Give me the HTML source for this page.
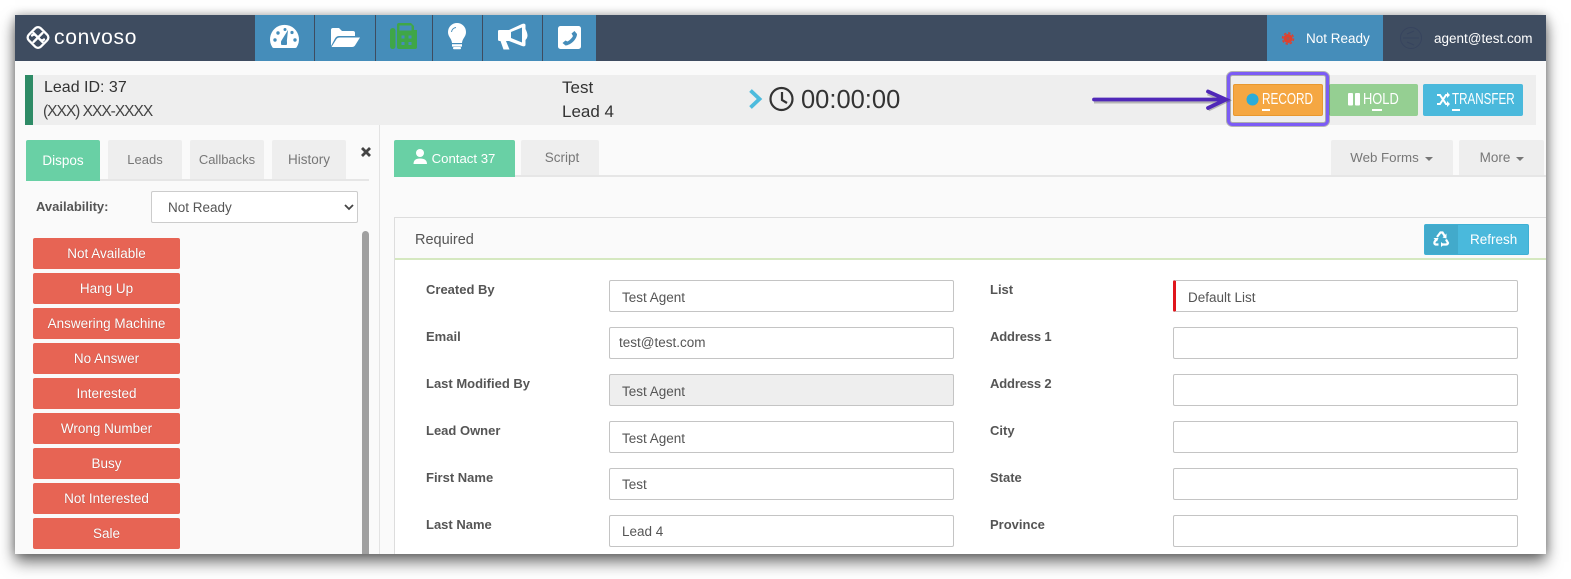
<!DOCTYPE html>
<html><head><meta charset="utf-8"><style>
html,body{margin:0;padding:0;background:#fff;width:1571px;height:579px;overflow:hidden;font-family:"Liberation Sans",sans-serif}
#w{position:absolute;left:15px;top:15px;width:1531px;height:539px;background:#fafafa;box-shadow:0 8px 15px rgba(0,0,0,.55),0 0 9px rgba(0,0,0,.28)}
#c{position:absolute;left:0;top:0;width:1546px;height:554px;overflow:hidden;filter:blur(.3px)}
.b{position:absolute;box-sizing:border-box}
.t{position:absolute;white-space:nowrap;line-height:20px;height:20px}
.sx{transform-origin:left center}
.tab{position:absolute;box-sizing:border-box;background:#eee;color:#777;font-size:13.5px;display:flex;align-items:center;justify-content:center;border-radius:2px 2px 0 0}
.on{background:#69d0a5;color:#fff}
.red{position:absolute;left:33px;width:147px;height:31px;background:#e76454;color:#fff;font-size:13.5px;display:flex;align-items:center;justify-content:center;border-radius:2px;text-shadow:0 0 1px rgba(0,0,0,.3)}
.act{position:absolute;top:84px;height:32px;box-sizing:border-box;border-radius:2px}
.lb{position:absolute;font-size:13px;font-weight:bold;color:#555;white-space:nowrap;line-height:18px}
.in{position:absolute;box-sizing:border-box;height:32px;background:#fff;border:1px solid #c4c4c4;border-radius:2px;color:#555;font-size:13.5px;line-height:32px;padding-left:12px;white-space:nowrap}
</style></head><body>
<div id="w"></div>
<div id="c">
<div class="b" style="left:15px;top:15px;width:1531px;height:46px;background:#3e4c60"></div>
<div class="t" style="left:54px;top:28px;color:#fff;font-size:21px;letter-spacing:.7px">convoso</div>

<div class="b" style="left:255px;top:15px;width:59px;height:46px;background:#458dba"></div>
<div class="b" style="left:315px;top:15px;width:60px;height:46px;background:#458dba"></div>
<div class="b" style="left:376px;top:15px;width:56px;height:46px;background:#458dba"></div>
<div class="b" style="left:433px;top:15px;width:49px;height:46px;background:#458dba"></div>
<div class="b" style="left:483px;top:15px;width:59px;height:46px;background:#458dba"></div>
<div class="b" style="left:543px;top:15px;width:53px;height:46px;background:#458dba"></div>
<div class="b" style="left:1267px;top:15px;width:116px;height:46px;background:#458dba"></div>
<div class="t" style="left:1306px;top:29px;color:#fff;font-size:13.5px">Not Ready</div>
<div class="t" style="left:1434px;top:29px;color:#fff;font-size:13.5px">agent@test.com</div>

<div class="b" style="left:25px;top:75px;width:1511px;height:50px;background:#eee"></div>
<div class="b" style="left:25px;top:75px;width:8px;height:50px;background:#2e8b66"></div>
<div class="t" style="left:44px;top:78px;color:#333;font-size:16px">Lead ID: 37</div>
<div class="t" style="left:43px;top:102px;color:#444;font-size:15.5px;letter-spacing:-1px">(XXX) XXX-XXXX</div>
<div class="t" style="left:562px;top:78px;color:#333;font-size:17px">Test</div>
<div class="t" style="left:562px;top:102px;color:#333;font-size:17px">Lead 4</div>
<div class="t" style="left:801px;top:90px;color:#333;font-size:25.5px">00:00:00</div>

<div class="act" style="left:1233px;width:90px;background:#f5a742;border:1px solid #e8982f"></div>
<div class="act" style="left:1329px;width:89px;background:#95cf92"></div>
<div class="act" style="left:1423px;width:100px;background:#4ab9dc"></div>
<div class="t sx" style="left:1262px;top:90px;color:#fff;font-size:15.5px;transform:scaleX(.76)">RECORD</div>
<div class="t sx" style="left:1363px;top:90px;color:#fff;font-size:15.5px;transform:scaleX(.83)">HOLD</div>
<div class="t sx" style="left:1452px;top:90px;color:#fff;font-size:15.5px;transform:scaleX(.75)">TRANSFER</div>
<div class="b" style="left:1262px;top:109px;width:8px;height:2px;background:#fff"></div>
<div class="b" style="left:1372px;top:109px;width:10px;height:2px;background:#fff"></div>
<div class="b" style="left:1452px;top:109px;width:8px;height:2px;background:#fff"></div>

<div class="b" style="left:26px;top:179px;width:343px;height:2px;background:#e6e6e6"></div>
<div class="tab on" style="left:26px;top:140px;width:74px;height:41px">Dispos</div>
<div class="tab" style="left:108px;top:140px;width:74px;height:39px;font-size:13px">Leads</div>
<div class="tab" style="left:190px;top:140px;width:74px;height:39px;font-size:13px">Callbacks</div>
<div class="tab" style="left:272px;top:140px;width:74px;height:39px">History</div>
<div class="b" style="left:379px;top:125px;width:1px;height:429px;background:#e3e3e3"></div>
<div class="lb" style="left:36px;top:198px">Availability:</div>
<div class="b" style="left:151px;top:191px;width:207px;height:32px;background:#fff;border:1px solid #ccc;border-radius:2px;color:#555;font-size:13.5px;line-height:31px;padding-left:16px">Not Ready</div>
<div class="b" style="left:362px;top:231px;width:7px;height:330px;background:#a0a0a0;border-radius:4px"></div>
<div class="red" style="top:238px">Not Available</div>
<div class="red" style="top:273px">Hang Up</div>
<div class="red" style="top:308px">Answering Machine</div>
<div class="red" style="top:343px">No Answer</div>
<div class="red" style="top:378px">Interested</div>
<div class="red" style="top:413px">Wrong Number</div>
<div class="red" style="top:448px">Busy</div>
<div class="red" style="top:483px">Not Interested</div>
<div class="red" style="top:518px">Sale</div>

<div class="b" style="left:394px;top:175px;width:1152px;height:2px;background:#e6e6e6"></div>
<div class="tab on" style="left:394px;top:140px;width:121px;height:37px;padding-left:18px;font-size:13.2px">Contact 37</div>
<div class="tab" style="left:521px;top:140px;width:78px;height:35px;padding-left:4px">Script</div>
<div class="tab" style="left:1331px;top:140px;width:122px;height:35px;padding-right:15px;font-size:13.3px">Web Forms</div>
<div class="tab" style="left:1459px;top:140px;width:85px;height:35px;padding-right:13px">More</div>

<div class="b" style="left:394px;top:217px;width:1160px;height:345px;background:#fff;border:1px solid #ddd"></div>
<div class="b" style="left:395px;top:218px;width:1158px;height:40px;background:#fafafa"></div>
<div class="b" style="left:395px;top:258px;width:1158px;height:2px;background:#d5e8c0"></div>
<div class="t" style="left:415px;top:230px;color:#555;font-size:14.5px">Required</div>
<div class="b" style="left:1424px;top:224px;width:105px;height:31px;background:#4ab9dc;border:1px solid #3fb0d4;border-radius:2px"></div>
<div class="b" style="left:1425px;top:225px;width:33px;height:29px;background:#42aacb"></div>
<div class="t" style="left:1470px;top:230px;color:#fff;font-size:13.5px">Refresh</div>

<div class="lb" style="left:426px;top:281px">Created By</div>
<div class="lb" style="left:426px;top:328px">Email</div>
<div class="lb" style="left:426px;top:375px">Last Modified By</div>
<div class="lb" style="left:426px;top:422px">Lead Owner</div>
<div class="lb" style="left:426px;top:469px">First Name</div>
<div class="lb" style="left:426px;top:516px">Last Name</div>
<div class="lb" style="left:990px;top:281px">List</div>
<div class="lb" style="left:990px;top:328px;letter-spacing:-.15px">Address 1</div>
<div class="lb" style="left:990px;top:375px;letter-spacing:-.15px">Address 2</div>
<div class="lb" style="left:990px;top:422px">City</div>
<div class="lb" style="left:990px;top:469px">State</div>
<div class="lb" style="left:990px;top:516px">Province</div>

<div class="in" style="left:609px;top:280px;width:345px;line-height:33px">Test Agent</div>
<div class="in" style="left:609px;top:327px;width:345px;padding-left:9px;line-height:30px">test@test.com</div>
<div class="in" style="left:609px;top:374px;width:345px;background:#eee;line-height:33px">Test Agent</div>
<div class="in" style="left:609px;top:421px;width:345px;line-height:33px">Test Agent</div>
<div class="in" style="left:609px;top:468px;width:345px">Test</div>
<div class="in" style="left:609px;top:515px;width:345px">Lead 4</div>
<div class="in" style="left:1173px;top:280px;width:345px;border-left:3px solid #e0161d;line-height:33px;padding-left:12px">Default List</div>
<div class="in" style="left:1173px;top:327px;width:345px"></div>
<div class="in" style="left:1173px;top:374px;width:345px"></div>
<div class="in" style="left:1173px;top:421px;width:345px"></div>
<div class="in" style="left:1173px;top:468px;width:345px"></div>
<div class="in" style="left:1173px;top:515px;width:345px"></div>

<svg class="b" style="left:0;top:0" width="1571" height="554" viewBox="0 0 1571 554">
<!-- logo -->
<g fill="none" stroke="#fff" stroke-width="2.300" stroke-linejoin="round" stroke-linecap="round">
<rect x="29.500" y="29" width="17" height="17" rx="4" transform="rotate(45 38 37.500)"/>
<path d="M33.500 33 L40 39.500 Q42 41.500 44 39.500 M42.500 42 L36 35.500 Q34 33.500 32 35.500"/>
<path d="M42.500 33 L38.500 37 M33.500 42 L37 38.500"/>
</g>
<!-- gauge -->
<path d="M272.500 47.500 A14.500 14.500 0 1 1 296.500 47.500 Q296 48 295 48 H274 Q273 48 272.500 47.500Z" fill="#fff"/>
<g fill="#458dba"><circle cx="275" cy="40" r="1.700"/><circle cx="278" cy="33" r="1.700"/><circle cx="285" cy="29.500" r="1.500"/><circle cx="292" cy="32.500" r="1.600"/><circle cx="295" cy="40" r="1.700"/>
<path d="M288 30 L286.800 41.500 A2.900 2.900 0 1 1 281.200 41 Z"/><rect x="281" y="41" width="6" height="4" rx="1"/></g>
<!-- folder -->
<path d="M331 46 V30 Q331 28 333 28 H339 L342 31 H353 Q355 31 355 33 V36 H339 Q336.500 36 335 38.500Z" fill="#fff"/>
<path d="M331.500 47 L336.500 39 Q337.500 37.500 340 37.500 H360 L355 45.500 Q354 47 352 47Z" fill="#fff"/>
<!-- fax -->
<rect x="390" y="28" width="5.500" height="21" rx="2.700" fill="#3fa648"/>
<path d="M397 31 V25 Q397 23 399 23 H411 L414 26 V30 H417 V47 Q417 49 415 49 H399 Q397 49 397 47Z" fill="#3fa648"/>
<rect x="399.500" y="25.500" width="12" height="5" fill="#458dba"/>
<g fill="#458dba"><rect x="401.500" y="35.500" width="3" height="3"/><rect x="408.500" y="35.500" width="3" height="3"/><rect x="401.500" y="42" width="3" height="3"/><rect x="408.500" y="42" width="3" height="3"/></g>
<!-- bulb -->
<path d="M457 23 A9 9 0 0 1 466 32 C466 37 462.500 38 462 43 H452 C451.500 38 448 37 448 32 A9 9 0 0 1 457 23Z" fill="#fff"/>
<rect x="452" y="44.200" width="10" height="2.400" fill="#fff"/><rect x="453" y="47" width="8" height="2.300" rx="1" fill="#fff"/>
<path d="M451.500 32 A5 5 0 0 1 456 27.500" fill="none" stroke="#458dba" stroke-width="1"/>
<!-- megaphone -->
<path d="M498 31 Q498 30 499.500 30 H509 L522 24 Q525 23 525.500 25 V29 Q527.500 33 527.500 35.500 Q527.500 38 525.500 40 V45 Q525 47 522 46 L509 41 H506 L509.500 49.500 H503.500 L500.500 41 H499.500 Q498 41 498 39.500Z" fill="#fff"/>
<path d="M511 32 L522 27.500 V42.500 L511 38Z" fill="#458dba"/>
<!-- phone square -->
<rect x="558" y="26" width="23" height="23" rx="2.500" fill="#fff"/>
<path d="M574.500 31 L577 34 C577 39 571 45 565.500 45.500 L562.500 43 L565.500 40.500 L567.500 41.500 C569.500 40.500 572 38 573 36 L571.500 33.500Z" fill="#458dba"/>
<!-- gear status -->
<circle cx="1288" cy="38.500" r="4.500" fill="#e0402c"/>
<circle cx="1288" cy="38.500" r="5.500" fill="none" stroke="#e0402c" stroke-width="1.500" stroke-dasharray="2.500 1.800"/>
<circle cx="1288" cy="38.500" r="1.500" fill="#a8574f"/>
<!-- avatar -->
<circle cx="1411" cy="38" r="10.500" fill="none" stroke="#37445e" stroke-width="1"/>
<path d="M1403 38 H1419 M1407 34 L1414 31 M1407 42 L1414 45" fill="none" stroke="#37445e" stroke-width="1"/>
<!-- chevron / clock -->
<path d="M750.500 90.500 L759.500 99 L750.500 107.500" fill="none" stroke="#4dbbdd" stroke-width="3.800"/>
<circle cx="781.500" cy="99" r="11" fill="none" stroke="#333" stroke-width="2.200"/>
<path d="M782 92 V100 L787 103" fill="none" stroke="#333" stroke-width="2.200"/>
<!-- highlight / arrow -->
<rect x="1228.500" y="73.500" width="99" height="51" rx="4" fill="none" stroke="#333" stroke-opacity=".35" stroke-width="5"/>
<rect x="1228.500" y="73.500" width="99" height="51" rx="4" fill="none" stroke="#7c5cf5" stroke-width="3"/>
<path d="M1094 101 L1224 101 M1208 93 L1226 100.500 L1208 109" fill="none" stroke="#333" stroke-opacity=".3" stroke-width="5"/>
<path d="M1094 99.500 L1222 99.500 M1208 91.500 L1226 99.500 L1208 108" fill="none" stroke="#5028b8" stroke-width="3.800" stroke-linecap="round"/>
<!-- action icons -->
<circle cx="1252.500" cy="99.500" r="6" fill="#2bacd9"/>
<rect x="1348" y="93" width="5" height="12.500" rx="1" fill="#fff"/><rect x="1355" y="93" width="5" height="12.500" rx="1" fill="#fff"/>
<path d="M1437 95 H1440 L1446 104 H1448 M1437 104 H1440 L1446 95 H1448" fill="none" stroke="#fff" stroke-width="2"/>
<path d="M1447 92 L1450 95 L1447 98Z M1447 101 L1450 104 L1447 107Z" fill="#fff"/>
<!-- close / select chevron -->
<path d="M362 148 L370 156 M370 148 L362 156" stroke="#444" stroke-width="2.800"/>
<path d="M345 205 L349 209 L353 205" fill="none" stroke="#444" stroke-width="1.800"/>
<!-- user -->
<circle cx="420" cy="153" r="4" fill="#fff"/><path d="M413.500 164 Q413.500 158.500 420 158.500 Q427 158.500 427 164Z" fill="#fff"/>
<!-- carets -->
<path d="M1425 157 h8 l-4 4z M1516 157 h8 l-4 4z" fill="#777"/>
<!-- recycle -->
<g fill="none" stroke="#fff" stroke-width="2.200"><path d="M1437 237 L1440.500 232.500 H1442.500 L1445 236.500"/><path d="M1446 239.500 L1448 243 Q1447.500 244.500 1446 244.500 H1442.500"/><path d="M1438.500 244.500 H1435.500 Q1434 244 1434.500 242 L1436 239.500"/></g>
<path d="M1446.500 233.500 L1446.500 238.500 L1442.500 237.500Z M1441 242 L1441 247 L1444 244.500Z M1433.500 238 L1438.500 238 L1437 241.500Z" fill="#fff"/>
</svg>
</div>
</body></html>
